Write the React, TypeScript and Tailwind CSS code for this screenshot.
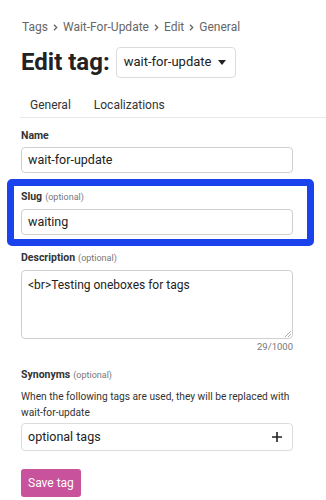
import React from "react";

const Chevron = () => (
  <svg className="mx-[5px] h-[7px] w-[5px]" viewBox="0 0 5 7" fill="none" stroke="currentColor" strokeWidth={1.3}>
    <path d="M1 0.8l2.7 2.7L1 6.2" />
  </svg>
);

const Label = ({ name, optional }: { name: string; optional?: boolean }) => (
  <div className="mb-[5px] h-[14px] text-[10.5px] leading-[14px] font-bold text-[#333]">
    {name}
    {optional && <span className="ml-[3px] text-[9px] font-normal text-[#777]">(optional)</span>}
  </div>
);

export default function App() {
  return (
    <div className="min-h-[500px] w-[326px] overflow-hidden bg-white font-['Roboto',sans-serif] text-[#222]">
      {/* Breadcrumb */}
      <div className="flex items-center px-[22px] pt-[19px] text-[12px] leading-[16px] text-[#666]">
        <span>Tags</span>
        <Chevron />
        <span>Wait-For-Update</span>
        <Chevron />
        <span>Edit</span>
        <Chevron />
        <span>General</span>
      </div>

      {/* Title */}
      <div className="mt-[11px] flex h-[32px] items-center px-[21px]">
        <h1 className="text-[24px] leading-[30px] font-bold text-[#222]">Edit tag:</h1>
        <button className="ml-[6px] flex h-[31px] items-center rounded-[4px] border border-[#dcdcdc] pl-[7px] pr-[9px] text-[13px] text-[#222]">
          wait-for-update
          <svg className="ml-[7px] h-[5px] w-[8px]" viewBox="0 0 8 5" fill="#222">
            <path d="M0 0h8L4 5z" />
          </svg>
        </button>
      </div>

      {/* Tabs */}
      <div className="ml-[20px] mt-[19px] flex h-[21px] items-start border-b border-[#e8e8e8] text-[12px] leading-[16px] text-[#333]">
        <span className="ml-[10px]">General</span>
        <span className="ml-[23px]">Localizations</span>
      </div>

      <div className="w-[314px] px-[21px] pt-[11px]">
        {/* Name */}
        <div className="mb-[5px] h-[13px] text-[10.5px] leading-[13px] font-bold text-[#333]">Name</div>
        <div className="flex h-[26px] items-center rounded-[4px] border border-[#cfcfcf] px-[6px] text-[12.5px]">
          wait-for-update
        </div>

        {/* Slug (highlighted) */}
        <div className="relative mt-[17px]">
          <Label name="Slug" optional />
          <div className="flex h-[26px] items-center rounded-[4px] border border-[#cfcfcf] px-[6px] text-[12.5px]">
            waiting
          </div>
          <div className="pointer-events-none absolute -left-[14px] -right-[21px] -top-[11px] -bottom-[11px] rounded-[5px] border-[7px] border-[#1a43ee]" />
        </div>

        {/* Description */}
        <div className="mt-[16px]">
          <Label name="Description" optional />
          <div className="relative h-[69px] rounded-[4px] border border-[#cfcfcf] px-[6px] pt-[6px] text-[12px] leading-[16px]">
            &lt;br&gt;Testing oneboxes for tags
            <svg className="absolute bottom-[1px] right-[1px] h-[6px] w-[6px]" viewBox="0 0 6 6" stroke="#aaa" strokeWidth={1}>
              <path d="M6 0L0 6M6 3L3 6" />
            </svg>
          </div>
          <div className="mt-[2px] text-right text-[9.5px] leading-[12px] text-[#777]">29/1000</div>
        </div>

        {/* Synonyms */}
        <div className="mt-[15px]">
          <Label name="Synonyms" optional />
          <p className="mt-[7px] text-[10.2px] leading-[16px] text-[#333]">
            When the following tags are used, they will be replaced with wait-for-update
          </p>
          <div className="mt-[2px] flex h-[28px] items-center justify-between rounded-[4px] border border-[#dcdcdc] pl-[6px] pr-[10px] text-[12.5px]">
            optional tags
            <svg className="h-[10px] w-[10px]" viewBox="0 0 10 10" stroke="#222" strokeWidth={1.6}>
              <path d="M5 0v10M0 5h10" />
            </svg>
          </div>
        </div>

        <button className="mt-[18px] h-[28px] rounded-[3px] bg-[#c8539c] px-[7px] text-[12px] text-white">
          Save tag
        </button>
      </div>
    </div>
  );
}
